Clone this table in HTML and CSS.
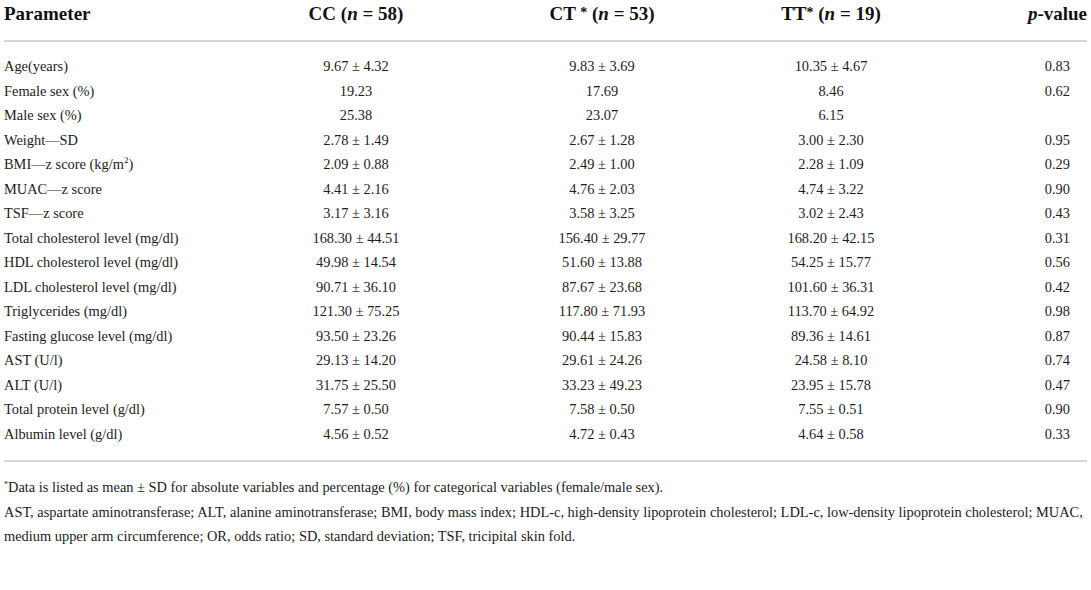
FILE: index.html
```html
<!DOCTYPE html>
<html lang="en">

<head>
        <meta charset="UTF-8">
        <meta name="viewport" content="width=device-width, initial-scale=1.0">
        <title>Table 1</title>
        <link rel="stylesheet" href="styles.css">
</head>

<body>
        <div class="table-wrap">
                <table class="data">
                        <colgroup>
                                <col class="c-param">
                                <col class="c-cc">
                                <col class="c-ct">
                                <col class="c-tt">
                                <col class="c-p">
                        </colgroup>
                        <thead>
                                <tr>
                                        <th class="param">Parameter</th>
                                        <th>CC (<i>n</i> = 58)</th>
                                        <th>CT <span class="star">*</span> (<i>n</i> = 53)</th>
                                        <th>TT<span class="star">*</span> (<i>n</i> = 19)</th>
                                        <th class="pv"><i>p</i>-value</th>
                                </tr>
                        </thead>
                        <tbody>
                                <tr>
                                        <td class="param">Age(years)</td>
                                        <td>9.67 ± 4.32</td>
                                        <td>9.83 ± 3.69</td>
                                        <td>10.35 ± 4.67</td>
                                        <td class="pv">0.83</td>
                                </tr>
                                <tr>
                                        <td class="param">Female sex (%)</td>
                                        <td>19.23</td>
                                        <td>17.69</td>
                                        <td>8.46</td>
                                        <td class="pv">0.62</td>
                                </tr>
                                <tr>
                                        <td class="param">Male sex (%)</td>
                                        <td>25.38</td>
                                        <td>23.07</td>
                                        <td>6.15</td>
                                        <td class="pv"></td>
                                </tr>
                                <tr>
                                        <td class="param">Weight—SD</td>
                                        <td>2.78 ± 1.49</td>
                                        <td>2.67 ± 1.28</td>
                                        <td>3.00 ± 2.30</td>
                                        <td class="pv">0.95</td>
                                </tr>
                                <tr>
                                        <td class="param">BMI—z score (kg/m<sup>2</sup>)</td>
                                        <td>2.09 ± 0.88</td>
                                        <td>2.49 ± 1.00</td>
                                        <td>2.28 ± 1.09</td>
                                        <td class="pv">0.29</td>
                                </tr>
                                <tr>
                                        <td class="param">MUAC—z score</td>
                                        <td>4.41 ± 2.16</td>
                                        <td>4.76 ± 2.03</td>
                                        <td>4.74 ± 3.22</td>
                                        <td class="pv">0.90</td>
                                </tr>
                                <tr>
                                        <td class="param">TSF—z score</td>
                                        <td>3.17 ± 3.16</td>
                                        <td>3.58 ± 3.25</td>
                                        <td>3.02 ± 2.43</td>
                                        <td class="pv">0.43</td>
                                </tr>
                                <tr>
                                        <td class="param">Total cholesterol level (mg/dl)</td>
                                        <td>168.30 ± 44.51</td>
                                        <td>156.40 ± 29.77</td>
                                        <td>168.20 ± 42.15</td>
                                        <td class="pv">0.31</td>
                                </tr>
                                <tr>
                                        <td class="param">HDL cholesterol level (mg/dl)</td>
                                        <td>49.98 ± 14.54</td>
                                        <td>51.60 ± 13.88</td>
                                        <td>54.25 ± 15.77</td>
                                        <td class="pv">0.56</td>
                                </tr>
                                <tr>
                                        <td class="param">LDL cholesterol level (mg/dl)</td>
                                        <td>90.71 ± 36.10</td>
                                        <td>87.67 ± 23.68</td>
                                        <td>101.60 ± 36.31</td>
                                        <td class="pv">0.42</td>
                                </tr>
                                <tr>
                                        <td class="param">Triglycerides (mg/dl)</td>
                                        <td>121.30 ± 75.25</td>
                                        <td>117.80 ± 71.93</td>
                                        <td>113.70 ± 64.92</td>
                                        <td class="pv">0.98</td>
                                </tr>
                                <tr>
                                        <td class="param">Fasting glucose level (mg/dl)</td>
                                        <td>93.50 ± 23.26</td>
                                        <td>90.44 ± 15.83</td>
                                        <td>89.36 ± 14.61</td>
                                        <td class="pv">0.87</td>
                                </tr>
                                <tr>
                                        <td class="param">AST (U/l)</td>
                                        <td>29.13 ± 14.20</td>
                                        <td>29.61 ± 24.26</td>
                                        <td>24.58 ± 8.10</td>
                                        <td class="pv">0.74</td>
                                </tr>
                                <tr>
                                        <td class="param">ALT (U/l)</td>
                                        <td>31.75 ± 25.50</td>
                                        <td>33.23 ± 49.23</td>
                                        <td>23.95 ± 15.78</td>
                                        <td class="pv">0.47</td>
                                </tr>
                                <tr>
                                        <td class="param">Total protein level (g/dl)</td>
                                        <td>7.57 ± 0.50</td>
                                        <td>7.58 ± 0.50</td>
                                        <td>7.55 ± 0.51</td>
                                        <td class="pv">0.90</td>
                                </tr>
                                <tr>
                                        <td class="param">Albumin level (g/dl)</td>
                                        <td>4.56 ± 0.52</td>
                                        <td>4.72 ± 0.43</td>
                                        <td>4.64 ± 0.58</td>
                                        <td class="pv">0.33</td>
                                </tr>
                        </tbody>
                </table>

                <div class="notes">
                        <p><sup class="fn">*</sup>Data is listed as mean ± SD for absolute variables and percentage (%) for categorical variables (female/male sex).</p>
                        <p>AST, aspartate aminotransferase; ALT, alanine aminotransferase; BMI, body mass index; HDL-c, high-density lipoprotein cholesterol; LDL-c, low-density lipoprotein cholesterol; MUAC,<br>medium upper arm circumference; OR, odds ratio; SD, standard deviation; TSF, tricipital skin fold.</p>
                </div>
        </div>
</body>

</html>
```

FILE: styles.css
```css
body {
        font-family: "Liberation Serif", "Times New Roman", serif;
        background-color: #fff;
        color: #1c1c1c;
        margin: 0;
        padding: 0;
}

.table-wrap {
        width: 1083px;
        margin: 0 4px;
}

/* tabela principal */
.data {
        width: 100%;
        border-collapse: collapse;
        table-layout: fixed;
}

.c-param { width: 236px; }
.c-cc { width: 232px; }
.c-ct { width: 260px; }
.c-tt { width: 198px; }
.c-p { width: 157px; }

.data th {
        font-size: 19px;
        font-weight: bold;
        color: #111;
        line-height: 22px;
        padding: 2px 0 15px 0;
        text-align: center;
        white-space: nowrap;
        border-bottom: 2px solid #d6d6d6;
}

.data th .star {
        font-size: 14px;
        vertical-align: 3px;
}

.data td {
        font-size: 14.4px;
        line-height: 24.5px;
        padding: 0;
        text-align: center;
        white-space: nowrap;
}

.data .param {
        text-align: left;
}

.data th.pv {
        text-align: right;
}

.data td.pv {
        text-align: right;
        padding-right: 17px;
}

.data tbody tr:first-child td {
        padding-top: 12px;
}

.data tbody tr:last-child td {
        padding-bottom: 14px;
        border-bottom: 2px solid #d6d6d6;
}

sup {
        font-size: 9px;
        line-height: 0;
        vertical-align: 6px;
}

/* notas de rodapé */
.notes {
        padding-top: 13px;
}

.notes p {
        font-size: 14.4px;
        line-height: 24.5px;
        margin: 0;
        white-space: nowrap;
}

.notes .fn {
        font-size: 8px;
        vertical-align: 5px;
}
```
